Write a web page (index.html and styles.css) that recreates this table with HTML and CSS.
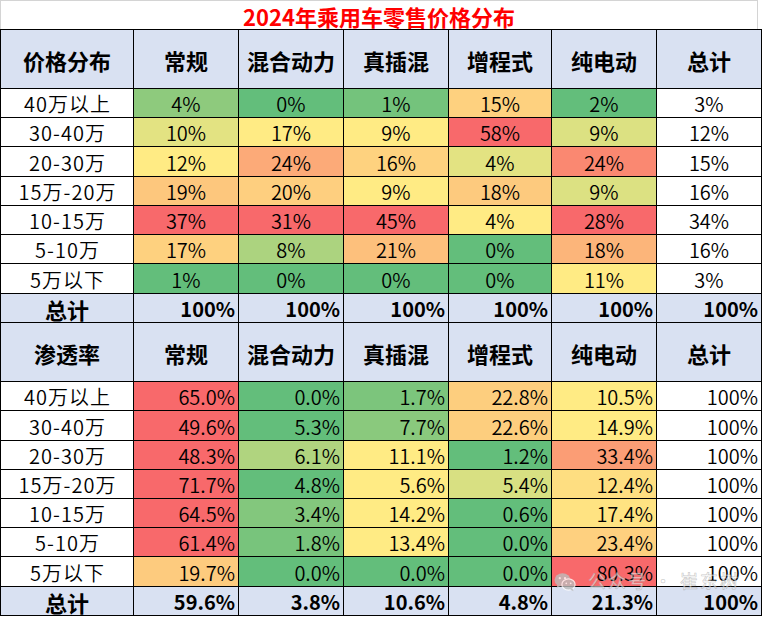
FILE: index.html
```html
<!DOCTYPE html>
<html lang="zh-CN">
<head>
<meta charset="utf-8">
<title>2024年乘用车零售价格分布</title>
<link rel="stylesheet" href="styles.css">
</head>
<body>
<div class="page">
  <div class="title">2024年乘用车零售价格分布</div>
  <div class="grid">
    <div class="h">价格分布</div><div class="h">常规</div><div class="h">混合动力</div><div class="h">真插混</div><div class="h">增程式</div><div class="h">纯电动</div><div class="h">总计</div>

    <div class="lbl">40万以上</div><div class="c" data-g="c1">4%</div><div class="c" data-g="c2">0%</div><div class="c" data-g="c3">1%</div><div class="c" data-g="c4">15%</div><div class="c" data-g="c5">2%</div><div class="tot">3%</div>
    <div class="lbl">30-40万</div><div class="c" data-g="c1">10%</div><div class="c" data-g="c2">17%</div><div class="c" data-g="c3">9%</div><div class="c" data-g="c4">58%</div><div class="c" data-g="c5">9%</div><div class="tot">12%</div>
    <div class="lbl">20-30万</div><div class="c" data-g="c1">12%</div><div class="c" data-g="c2">24%</div><div class="c" data-g="c3">16%</div><div class="c" data-g="c4" data-v="3.6">4%</div><div class="c" data-g="c5">24%</div><div class="tot">15%</div>
    <div class="lbl">15万-20万</div><div class="c" data-g="c1">19%</div><div class="c" data-g="c2">20%</div><div class="c" data-g="c3">9%</div><div class="c" data-g="c4">18%</div><div class="c" data-g="c5">9%</div><div class="tot">16%</div>
    <div class="lbl">10-15万</div><div class="c" data-g="c1">37%</div><div class="c" data-g="c2">31%</div><div class="c" data-g="c3">45%</div><div class="c" data-g="c4" data-v="4.4">4%</div><div class="c" data-g="c5">28%</div><div class="tot">34%</div>
    <div class="lbl">5-10万</div><div class="c" data-g="c1">17%</div><div class="c" data-g="c2">8%</div><div class="c" data-g="c3">21%</div><div class="c" data-g="c4">0%</div><div class="c" data-g="c5">18%</div><div class="tot">16%</div>
    <div class="lbl">5万以下</div><div class="c" data-g="c1">1%</div><div class="c" data-g="c2">0%</div><div class="c" data-g="c3">0%</div><div class="c" data-g="c4">0%</div><div class="c" data-g="c5">11%</div><div class="tot">3%</div>

    <div class="sumlbl">总计</div><div class="sum">100%</div><div class="sum">100%</div><div class="sum">100%</div><div class="sum">100%</div><div class="sum">100%</div><div class="sum">100%</div>

    <div class="h">渗透率</div><div class="h">常规</div><div class="h">混合动力</div><div class="h">真插混</div><div class="h">增程式</div><div class="h">纯电动</div><div class="h">总计</div>

    <div class="lbl">40万以上</div><div class="r" data-g="r1">65.0%</div><div class="r" data-g="r1">0.0%</div><div class="r" data-g="r1">1.7%</div><div class="r" data-g="r1">22.8%</div><div class="r" data-g="r1">10.5%</div><div class="tot2">100%</div>
    <div class="lbl">30-40万</div><div class="r" data-g="r2">49.6%</div><div class="r" data-g="r2">5.3%</div><div class="r" data-g="r2">7.7%</div><div class="r" data-g="r2">22.6%</div><div class="r" data-g="r2">14.9%</div><div class="tot2">100%</div>
    <div class="lbl">20-30万</div><div class="r" data-g="r3">48.3%</div><div class="r" data-g="r3">6.1%</div><div class="r" data-g="r3">11.1%</div><div class="r" data-g="r3">1.2%</div><div class="r" data-g="r3">33.4%</div><div class="tot2">100%</div>
    <div class="lbl">15万-20万</div><div class="r" data-g="r4">71.7%</div><div class="r" data-g="r4">4.8%</div><div class="r" data-g="r4">5.6%</div><div class="r" data-g="r4">5.4%</div><div class="r" data-g="r4">12.4%</div><div class="tot2">100%</div>
    <div class="lbl">10-15万</div><div class="r" data-g="r5">64.5%</div><div class="r" data-g="r5">3.4%</div><div class="r" data-g="r5">14.2%</div><div class="r" data-g="r5">0.6%</div><div class="r" data-g="r5">17.4%</div><div class="tot2">100%</div>
    <div class="lbl">5-10万</div><div class="r" data-g="r6">61.4%</div><div class="r" data-g="r6">1.8%</div><div class="r" data-g="r6">13.4%</div><div class="r" data-g="r6">0.0%</div><div class="r" data-g="r6">23.4%</div><div class="tot2">100%</div>
    <div class="lbl">5万以下</div><div class="r" data-g="r7">19.7%</div><div class="r" data-g="r7">0.0%</div><div class="r" data-g="r7">0.0%</div><div class="r" data-g="r7">0.0%</div><div class="r" data-g="r7">80.3%</div><div class="tot2">100%</div>

    <div class="sumlbl">总计</div><div class="sum">59.6%</div><div class="sum">3.8%</div><div class="sum">10.6%</div><div class="sum">4.8%</div><div class="sum">21.3%</div><div class="sum">100%</div>
  </div>

  <div class="watermark">
    <svg class="wm-icon" width="22" height="20" viewBox="0 0 22 20" aria-hidden="true">
      <ellipse cx="8.5" cy="8" rx="8" ry="6.8" fill="#bdbdbd"/>
      <path d="M3.5 12.5 L2.5 16 L6.5 14 Z" fill="#bdbdbd"/>
      <ellipse cx="14.5" cy="12.5" rx="6.6" ry="5.6" fill="#bdbdbd" stroke="#fff" stroke-width="1.2"/>
      <path d="M18.5 16.5 L19.5 19.2 L16.2 17.6 Z" fill="#bdbdbd"/>
      <circle cx="5.8" cy="6.2" r="1.1" fill="#fff"/>
      <circle cx="11" cy="6.2" r="1.1" fill="#fff"/>
      <circle cx="12.3" cy="11.3" r="0.9" fill="#fff"/>
      <circle cx="16.7" cy="11.3" r="0.9" fill="#fff"/>
    </svg>
    <span class="wm-text">公众号 · 崔东树</span>
  </div>
</div>
<script src="script.js"></script>
</body>
</html>
```

FILE: styles.css
```css
* { box-sizing: border-box; }
html, body { margin: 0; padding: 0; background: #fff; }
body {
  font-family: "Noto Sans CJK SC", "Noto Sans", sans-serif;
  color: #000;
}
.page {
  position: relative;
  width: 763px;
  height: 617px;
}
.title {
  width: 758px;
  height: 29px;
  border: 1px solid #d4d4d4;
  border-bottom: 0;
  padding-top: 2px;
  line-height: 26px;
  text-align: center;
  font-size: 22px;
  font-weight: 700;
  color: #ff0000;
}
.grid {
  display: grid;
  width: 762px;
  background: #000;
  gap: 1px;
  padding: 1px;
  grid-template-columns: 132px 104px 104px 104px 102px 104px 104px;
  grid-template-rows: 58px 28px 28px 29px 28px 28px 28px 29px 28px 58px 28px 29px 28px 28px 28px 28px 29px 28px;
}
.grid > div {
  display: flex;
  align-items: center;
  padding-top: 2px;
  line-height: 26px;
  font-size: 20px;
  white-space: nowrap;
  background: #fff;
  font-weight: 350;
}
.grid > .h {
  background: #d9e1f2;
  justify-content: center;
  font-size: 22px;
  font-weight: 700;
}
.grid > .lbl {
  justify-content: center;
  letter-spacing: 1px;
  padding-left: 1px;
}
.grid > .c, .grid > .tot {
  justify-content: center;
}
.grid > .r, .grid > .tot2 {
  justify-content: flex-end;
  padding-right: 3px;
}
.grid > .sumlbl {
  background: #d9e1f2;
  justify-content: center;
  font-size: 22px;
  font-weight: 700;
}
.grid > .sum {
  background: #d9e1f2;
  justify-content: flex-end;
  padding-right: 3px;
  font-weight: 700;
}
.watermark {
  position: absolute;
  left: 554px;
  top: 568px;
  display: flex;
  align-items: center;
  gap: 12px;
  pointer-events: none;
}
.wm-icon { display: block; margin-top: 3px; opacity: 0.8; }
.wm-text {
  font-size: 18px;
  line-height: 24px;
  color: rgba(255, 255, 255, 0.55);
  -webkit-text-stroke: 0.6px rgba(150, 150, 150, 0.55);
  letter-spacing: 2px;
  white-space: nowrap;
}
```

FILE: script.js
```js
(function () {
  var G = [99, 190, 123], Y = [255, 235, 132], R = [248, 105, 107];
  function mix(a, b, t) {
    return a.map(function (x, i) { return Math.round(x + (b[i] - x) * t); });
  }
  function median(arr) {
    var s = arr.slice().sort(function (a, b) { return a - b; });
    var k = (s.length - 1) / 2;
    return (s[Math.floor(k)] + s[Math.ceil(k)]) / 2;
  }
  function colorFor(v, min, mid, max) {
    var c;
    if (v <= min) c = G;
    else if (v >= max) c = R;
    else if (v <= mid) c = mid > min ? mix(G, Y, (v - min) / (mid - min)) : Y;
    else c = mix(Y, R, (v - mid) / (max - mid));
    return "rgb(" + c.join(",") + ")";
  }
  var groups = {};
  document.querySelectorAll("[data-g]").forEach(function (el) {
    var g = el.getAttribute("data-g");
    (groups[g] = groups[g] || []).push(el);
  });
  Object.keys(groups).forEach(function (g) {
    var cells = groups[g];
    var vals = cells.map(function (c) {
      return parseFloat(c.getAttribute("data-v") || c.textContent);
    });
    var min = Math.min.apply(null, vals), max = Math.max.apply(null, vals), mid = median(vals);
    cells.forEach(function (c, i) {
      c.style.background = colorFor(vals[i], min, mid, max);
    });
  });
})();
```
